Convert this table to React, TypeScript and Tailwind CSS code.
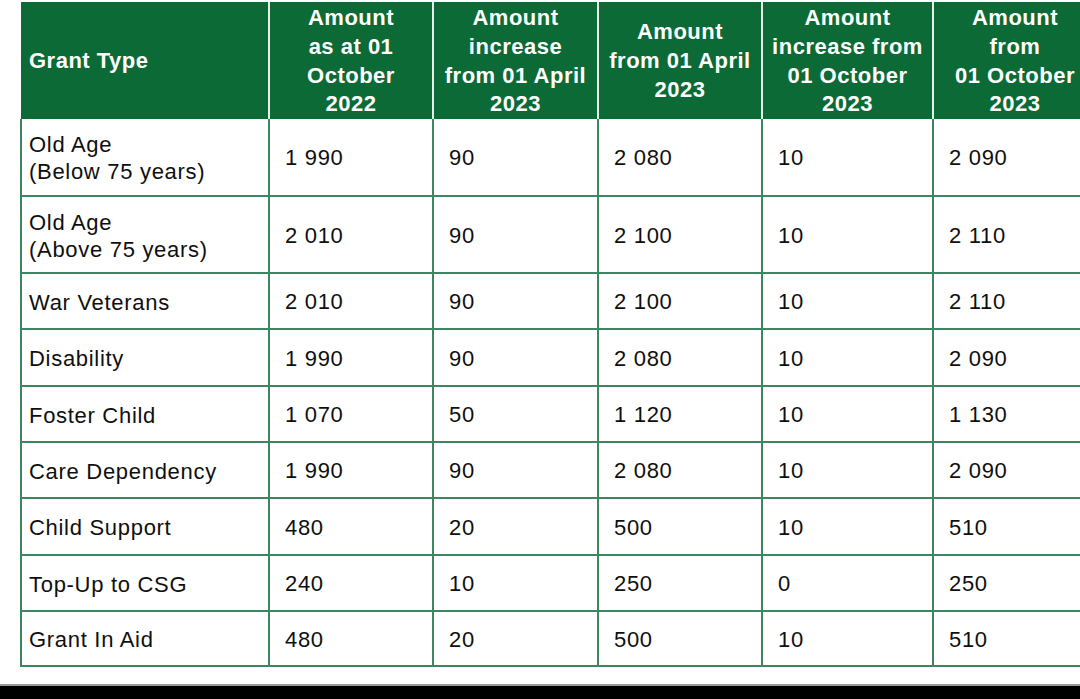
const rows = [
  { type: ['Old Age', '(Below 75 years)'], vals: ['1 990', '90', '2 080', '10', '2 090'], h: 'h-[78px]' },
  { type: ['Old Age', '(Above 75 years)'], vals: ['2 010', '90', '2 100', '10', '2 110'], h: 'h-[77px]' },
  { type: ['War Veterans'], vals: ['2 010', '90', '2 100', '10', '2 110'], h: 'h-[56px]' },
  { type: ['Disability'], vals: ['1 990', '90', '2 080', '10', '2 090'], h: 'h-[57px]' },
  { type: ['Foster Child'], vals: ['1 070', '50', '1 120', '10', '1 130'], h: 'h-[56px]' },
  { type: ['Care Dependency'], vals: ['1 990', '90', '2 080', '10', '2 090'], h: 'h-[56px]' },
  { type: ['Child Support'], vals: ['480', '20', '500', '10', '510'], h: 'h-[57px]' },
  { type: ['Top-Up to CSG'], vals: ['240', '10', '250', '0', '250'], h: 'h-[56px]' },
  { type: ['Grant In Aid'], vals: ['480', '20', '500', '10', '510'], h: 'h-[55px]' },
];

const headers = [
  ['Amount', 'as at 01', 'October', '2022'],
  ['Amount', 'increase', 'from 01 April', '2023'],
  ['Amount', 'from 01 April', '2023'],
  ['Amount', 'increase from', '01 October', '2023'],
  ['Amount', 'from', '01 October', '2023'],
];

const cols = 'grid grid-cols-[250px_164px_165px_164px_171px_164px]';

export default function App() {
  return (
    <div className="w-[1080px] h-[699px] overflow-hidden bg-white flex flex-col" style={{ fontFamily: '"Liberation Sans", Arial, sans-serif' }}>
      <div className="pl-[20px] pt-[2px] w-[1120px]">
        {/* header */}
        <div className={`${cols} h-[117px] text-white font-bold text-[22px] leading-[28.7px] tracking-[0.5px]`}>
          <div className="bg-[#0c6a36] ml-[1px] border-r-2 border-[#e6efe9] flex items-center pl-[8px] pt-[2px]">Grant Type</div>
          {headers.map((h, i) => (
            <div key={i} className="bg-[#0c6a36] border-r-2 border-[#e6efe9] flex flex-col items-center justify-center text-center pt-[2px]">
              {h.map((l, j) => (
                <span key={j} className="whitespace-nowrap">{l}</span>
              ))}
            </div>
          ))}
        </div>
        {/* body */}
        {rows.map((r, i) => (
          <div key={i} className={`${cols} ${r.h} text-[22px] leading-[27px] tracking-[0.7px] text-[#0f0f0f]`}>
            <div className="border-l-2 border-r-2 border-b-2 border-[#3d8760] flex flex-col justify-center pl-[7px] pt-[2px]">
              {r.type.map((t, j) => (
                <span key={j}>{t}</span>
              ))}
            </div>
            {r.vals.map((v, j) => (
              <div key={j} className="border-r-2 border-b-2 border-[#3d8760] flex items-center pl-[15px] pt-[1px]">{v}</div>
            ))}
          </div>
        ))}
      </div>
      <div className="flex-1" />
      <div className="h-[15px] bg-black border-t-[2px] border-[#9a9a9a]" />
    </div>
  );
}
